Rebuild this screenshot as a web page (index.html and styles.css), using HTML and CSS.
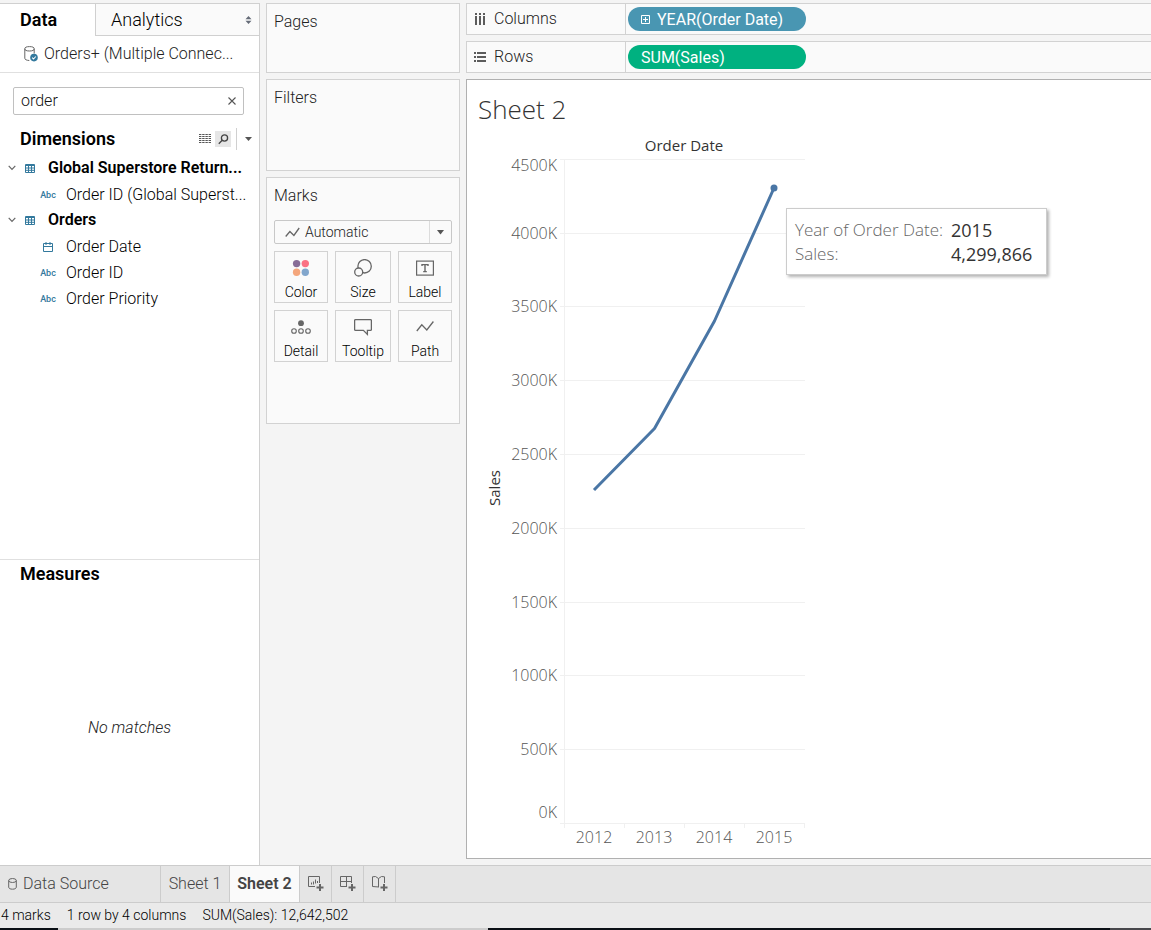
FILE: index.html
```html
<!DOCTYPE html>
<html lang="en">
<head>
<meta charset="utf-8">
<title>Sheet 2</title>
<link rel="stylesheet" href="styles.css">
</head>
<body>
<main class="workspace">
  <aside class="data-pane">
    <div class="pane-tabs">
      <button class="pane-tab pane-tab-active" type="button">Data</button>
      <button class="pane-tab pane-tab-rest" type="button">Analytics
        <svg width="7" height="8" viewBox="0 0 7 8"><path d="M.5 3.2 3.5 0l3 3.2zM.5 4.8 3.5 8l3-3.2z" fill="#666c78"/></svg>
      </button>
    </div>
    <div class="source">
      <svg width="15" height="16" viewBox="0 0 15 16" fill="none"><g stroke="#666" stroke-width="1"><ellipse cx="5.5" cy="2.8" rx="4.7" ry="2.2"/><path d="M.8 2.8v9.5c0 1.2 1.8 2.1 4.5 2.2M10.2 2.8v4.7"/></g><circle cx="10" cy="11.6" r="3.8" fill="#33799d"/><path d="m8.2 11.6 1.3 1.4 2.3-2.5" stroke="#fff" stroke-width="1.1"/></svg>
      <span>Orders+ (Multiple Connec...</span>
    </div>
    <section class="dimensions">
      <div class="search">
        <input type="text" value="order" aria-label="Search fields">
        <button type="button" aria-label="Clear search"><svg width="8" height="8" viewBox="0 0 8 8"><path d="m.5.5 7 7m0-7-7 7" stroke="#555" stroke-width="1.1"/></svg></button>
      </div>
      <div class="heading-row">
        <h2>Dimensions</h2>
        <button class="tool" type="button" aria-label="View data"><svg width="12" height="10" viewBox="0 0 12 10"><path d="M0 .5h12M0 2.5h12M0 4.5h12M0 6.5h12M0 8.5h12" stroke="#555" stroke-width="1" stroke-dasharray="2.4 .8"/></svg></button>
        <button class="tool tool-on" type="button" aria-label="Find field"><svg width="11" height="11" viewBox="0 0 11 11" fill="none" stroke="#444" stroke-width="1.3"><circle cx="6.5" cy="4" r="3.1"/><path d="M4.2 6.3.8 9.7"/></svg></button>
        <button class="tool tool-menu" type="button" aria-label="Dimensions menu"><svg width="7" height="4" viewBox="0 0 7 4"><path d="M0 0h7L3.5 4z" fill="#555"/></svg></button>
      </div>
      <ul class="fields">
        <li class="table-row">
          <svg class="chevron" width="8" height="6" viewBox="0 0 8 6"><path d="m.7.8 3.3 3.5L7.3.8" fill="none" stroke="#666" stroke-width="1.2"/></svg>
          <svg class="table-icon" width="10" height="9" viewBox="0 0 10 9"><path d="M.5.5h9v8h-9zM0 1.5h10M0 4h10M0 6.3h10M3.5 2v6.5M6.5 2v6.5" fill="none" stroke="#33799d"/></svg>
          <span>Global Superstore Return...</span>
        </li>
        <li class="field"><span class="type">Abc</span><span>Order ID (Global Superst...</span></li>
        <li class="table-row">
          <svg class="chevron" width="8" height="6" viewBox="0 0 8 6"><path d="m.7.8 3.3 3.5L7.3.8" fill="none" stroke="#666" stroke-width="1.2"/></svg>
          <svg class="table-icon" width="10" height="9" viewBox="0 0 10 9"><path d="M.5.5h9v8h-9zM0 1.5h10M0 4h10M0 6.3h10M3.5 2v6.5M6.5 2v6.5" fill="none" stroke="#33799d"/></svg>
          <span>Orders</span>
        </li>
        <li class="field"><span class="type"><svg width="10" height="10" viewBox="0 0 10 10"><path d="M.5 1.5h9v8h-9zM.5 4.5h9M3 0v3M7 0v3" fill="none" stroke="#33799d"/></svg></span><span>Order Date</span></li>
        <li class="field"><span class="type">Abc</span><span>Order ID</span></li>
        <li class="field"><span class="type">Abc</span><span>Order Priority</span></li>
      </ul>
    </section>
    <section class="measures">
      <h2>Measures</h2>
      <p>No matches</p>
    </section>
  </aside>

  <div class="cards">
    <section class="card card-pages"><h3>Pages</h3></section>
    <section class="card card-filters"><h3>Filters</h3></section>
    <section class="card card-marks">
      <h3>Marks</h3>
      <div class="mark-type">
        <svg class="mark-type-icon" width="15" height="11" viewBox="0 0 15 11"><path d="m.7 9.5 4.2-5 4 4L14.2 1" fill="none" stroke="#666" stroke-width="1.3"/></svg>
        <select aria-label="Mark type"><option>Automatic</option></select>
        <svg class="mark-type-arrow" width="7" height="5" viewBox="0 0 7 5"><path d="M0 0h7L3.5 4.5z" fill="#555"/></svg>
      </div>
      <div class="mark-grid">
        <button type="button"><svg width="18" height="18" viewBox="0 0 18 18"><circle cx="4.6" cy="4.6" r="3.7" fill="#876d97"/><circle cx="13.3" cy="4.6" r="3.7" fill="#fb7184"/><circle cx="4.6" cy="13.3" r="3.7" fill="#f4a67c"/><circle cx="13.3" cy="13.3" r="3.7" fill="#82a6cc"/></svg>Color</button>
        <button type="button"><svg width="18" height="18" viewBox="0 0 18 18" fill="#fafafa" stroke="#666" stroke-width="1.3"><circle cx="10.6" cy="7.3" r="6.7"/><circle cx="4.7" cy="13" r="4"/></svg>Size</button>
        <button type="button"><svg width="18" height="18" viewBox="0 0 18 18" fill="none" stroke="#666"><rect x=".6" y="2.1" width="16.8" height="14" stroke-width="1.2"/><path d="M6 7V5.6h6V7M9 5.6v7M7.2 12.6h3.6" stroke-width="1.4"/></svg>Label</button>
        <button type="button"><svg width="20" height="18" viewBox="0 0 20 18" fill="none" stroke="#666" stroke-width="1.1"><circle cx="10" cy="5.2" r="2.9" fill="#666" stroke="none"/><circle cx="3" cy="13" r="2.3"/><circle cx="10" cy="13" r="2.3"/><circle cx="17" cy="13" r="2.3"/></svg>Detail</button>
        <button type="button"><svg width="18" height="18" viewBox="0 0 18 18"><path d="M1.6 1.6h14.8q1 0 1 1v8.8q0 1-1 1h-3v4l-4-4H1.6q-1 0-1-1V2.6q0-1 1-1z" fill="none" stroke="#666" stroke-width="1.3"/></svg>Tooltip</button>
        <button type="button"><svg width="18" height="18" viewBox="0 0 18 18"><path d="m.8 13 5-6.200 5 5.200 6.600-8.500" fill="none" stroke="#666" stroke-width="1.3"/></svg>Path</button>
      </div>
    </section>
  </div>

  <div class="view">
    <div class="shelf">
      <div class="shelf-label"><svg width="12" height="12" viewBox="0 0 12 12"><path d="M2 0v12M6 0v12M10 0v12" stroke="#5c5c5c" stroke-width="2"/><path d="M0 2.5h12" stroke="#fafafa"/></svg>Columns</div>
      <button class="pill pill-blue" type="button"><svg width="9" height="9" viewBox="0 0 9 9"><path d="M.5.5h8v8h-8zM2 4.5h5M4.500 2v5" fill="none" stroke="#fff"/></svg>YEAR(Order Date)</button>
    </div>
    <div class="shelf">
      <div class="shelf-label"><svg width="12" height="12" viewBox="0 0 12 12"><path d="M0 2h12M0 6h12M0 10h12" stroke="#5c5c5c" stroke-width="2"/><path d="M2.500 0v12" stroke="#fafafa"/></svg>Rows</div>
      <button class="pill pill-green" type="button">SUM(Sales)</button>
    </div>
    <section class="sheet">
      <h1>Sheet 2</h1>
      <div class="chart-wrap">
        <svg class="chart" width="340" height="724" viewBox="467 130 340 724" role="img" aria-label="Sales by year of order date">
          <g class="grid-lines">
            <path d="M560 159.500H805M560 233.500H805M560 306.500H805M560 380.500H805M560 454.500H805M560 528.500H805M560 602.500H805M560 675.500H805M560 749.500H805M560 823.500H805"/>
            <path d="M564.500 159V828M624.500 823V828M684.500 823V828M744.500 823V828M804.500 823V828"/>
          </g>
          <text class="field-name" x="684" y="151" text-anchor="middle">Order Date</text>
          <text class="field-name" transform="translate(500 488) rotate(-90)" text-anchor="middle">Sales</text>
          <g class="axis" text-anchor="end">
            <text x="557" y="171">4500K</text><text x="557" y="239">4000K</text><text x="557" y="312">3500K</text><text x="557" y="386">3000K</text><text x="557" y="460">2500K</text><text x="557" y="534">2000K</text><text x="557" y="608">1500K</text><text x="557" y="681">1000K</text><text x="557" y="755">500K</text><text x="557" y="818">0K</text>
          </g>
          <g class="axis" text-anchor="middle">
            <text x="594" y="843">2012</text><text x="654" y="843">2013</text><text x="714" y="843">2014</text><text x="774" y="843">2015</text>
          </g>
          <path class="series" d="M594 490 654.500 428.500 714.500 321 774 188"/>
          <circle cx="774" cy="188" r="3.500" fill="#4a76a5"/>
        </svg>
        <dl class="tooltip">
          <dt>Year of Order Date:</dt><dd>2015</dd>
          <dt>Sales:</dt><dd>4,299,866</dd>
        </dl>
      </div>
    </section>
  </div>
</main>
<nav class="sheet-tabs">
  <button class="tab tab-source" type="button"><svg width="9" height="12" viewBox="0 0 9 12" fill="none" stroke="#666"><ellipse cx="4.500" cy="2.500" rx="3.800" ry="2"/><path d="M.7 2.500v6.700c0 1.200 1.500 2 3.800 2s3.800-.8 3.800-2V2.500"/></svg>Data Source</button>
  <button class="tab" type="button">Sheet 1</button>
  <button class="tab tab-active" type="button">Sheet 2</button>
  <button class="tab tab-new" type="button" aria-label="New worksheet"><svg width="16" height="16" viewBox="0 0 16 16" fill="none" stroke="#666"><path d="M7 10.500H.5v-10h11V7M3.500 8.500V6.500M5.500 8.500V5.500M7.500 7.500v-4M9.500 7V5"/><path d="M12 8v7M8.500 11.500h7" stroke-width="2"/></svg></button>
  <button class="tab tab-new" type="button" aria-label="New dashboard"><svg width="16" height="16" viewBox="0 0 16 16" fill="none" stroke="#666"><path d="M7 10.500H.5v-10h11V7M6.500.5v10M.5 5.500h11"/><path d="M12 8v7M8.500 11.500h7" stroke-width="2"/></svg></button>
  <button class="tab tab-new" type="button" aria-label="New story"><svg width="16" height="16" viewBox="0 0 16 16" fill="none" stroke="#666"><path d="M7 11 .5 10.500V.8L3.500.5l3 2 3-2 3 .3V7M6.500 2.500V11"/><path d="M12 8v7M8.500 11.500h7" stroke-width="2"/></svg></button>
</nav>
<footer class="status"><span>4 marks</span><span>1 row by 4 columns</span><span>SUM(Sales): 12,642,502</span></footer>
</body>
</html>
```
FILE: styles.css
```css
* { box-sizing: border-box; }
body {
  margin: 0;
  min-height: 100vh;
  display: flex;
  flex-direction: column;
  background: #f4f4f4;
  color: #000;
  font: 300 16px/20px Roboto, "Liberation Sans", sans-serif;
}
h1, h2, h3, p, ul, dl, dd { margin: 0; padding: 0; font-weight: 300; }
button, input, select { font: inherit; color: inherit; margin: 0; padding: 0; border: 0; background: none; }
svg { display: block; flex: none; }

.workspace { flex: 1; display: grid; grid-template-columns: 260px 194px minmax(0, 1fr); column-gap: 6px; padding-top: 3px; }

.data-pane { display: flex; flex-direction: column; background: #fff; border: solid #d0d0d0; border-width: 1px 1px 0 0; }
.pane-tabs { display: flex; height: 32px; font-size: 18px; }
.pane-tab { text-align: left; }
.pane-tab-active { width: 95px; padding-left: 20px; font-weight: 600; }
.pane-tab-rest { flex: 1; display: flex; align-items: center; justify-content: space-between; padding: 0 7px 0 15px; background: #fafafa; border: solid #d0d0d0; border-width: 0 0 1px 1px; }
.source { display: flex; align-items: center; gap: 5px; height: 37px; padding-left: 24px; border-bottom: 1px solid #e0e0e0; color: #222; white-space: nowrap; }
.dimensions { flex: 1; padding-top: 14px; }
.search { display: flex; align-items: center; height: 28px; margin: 0 15px 0 13px; padding: 0 7px; border: 1px solid #c0c0c0; border-radius: 2px; color: #111; }
.search input { flex: 1; min-width: 0; outline: 0; }
.heading-row { display: flex; align-items: center; height: 40px; margin-top: 4px; padding-left: 20px; }
h2 { font-size: 18px; font-weight: 600; }
.heading-row h2 { flex: 1; }
.tool { display: flex; align-items: center; justify-content: center; width: 16px; height: 16px; }
.tool-on { margin: 0 5px 0 2px; background: #e6e6e6; }
.tool-menu { width: 23px; height: 22px; border-left: 1px solid #d0d0d0; }
.fields { list-style: none; margin-top: -4px; white-space: nowrap; }
.fields li { display: flex; align-items: center; height: 26px; }
.table-row { padding-left: 8px; font-weight: 600; }
.chevron { margin-right: 9px; }
.table-icon { margin-right: 13px; }
.fields .field { padding: 2px 0 0 39px; }
.type { display: flex; justify-content: center; width: 18px; margin-right: 9px; font-size: 9px; font-weight: 500; color: #33799d; }
.measures { display: flex; flex-direction: column; min-height: 306px; padding-top: 4px; border-top: 1px solid #e0e0e0; }
.measures h2 { padding-left: 20px; }
.measures p { margin: auto; padding-top: 6px; font-style: italic; color: #222; }

.cards { display: flex; flex-direction: column; gap: 6px; }
.card { padding: 8px 7px; background: #fafafa; border: 1px solid #d2d2d2; }
.card-pages { min-height: 70px; }
.card-filters { min-height: 92px; }
.card-marks { min-height: 247px; }
h3 { font-size: 16px; line-height: 20px; color: #222; }
.mark-type { position: relative; margin-top: 14px; font-size: 14px; color: #222; }
.mark-type select { display: block; width: 100%; height: 24px; padding-left: 30px; appearance: none; border: 1px solid #c8c8c8; border-radius: 2px; }
.mark-type-icon { position: absolute; left: 11px; top: 7px; }
.mark-type-arrow { position: absolute; right: 8px; top: 10px; }
.mark-type::after { content: ""; position: absolute; right: 22px; top: 1px; bottom: 1px; border-left: 1px solid #dcdcdc; }
.mark-grid { display: grid; grid-template-columns: 54px 1fr 54px; gap: 7px; margin-top: 7px; }
.mark-grid button { display: flex; flex-direction: column; align-items: center; gap: 5px; height: 52px; padding-top: 7px; border: 1px solid #d2d2d2; font-size: 14px; line-height: 20px; }

.view { display: flex; flex-direction: column; gap: 6px; padding-bottom: 6px; }
.shelf { display: flex; align-items: center; height: 32px; background: #fafafa; border: solid #d2d2d2; border-width: 1px 0 1px 1px; }
.shelf-label { display: flex; align-items: center; align-self: stretch; gap: 8px; width: 159px; padding-left: 7px; border-right: 1px solid #d2d2d2; color: #222; }
.pill { display: flex; align-items: center; gap: 7px; width: 178px; height: 24px; margin-left: 2px; padding: 1px 0 0 13px; border-radius: 12px; color: #fff; font-weight: 400; white-space: nowrap; }
.pill-blue { background: #4996b2; }
.pill-green { background: #00b180; }
.sheet { flex: 1; padding: 12px 0 0; background: #fff; border: solid #b0b0b0; border-width: 1px 0 1px 1px; }
h1 { padding-left: 11px; font: 300 26px/34px "Open Sans", "Noto Sans", sans-serif; color: #333; }
.chart-wrap { position: relative; margin-top: 4px; font-family: "Open Sans", "Noto Sans", sans-serif; }
.chart text { font-size: 15px; }
.grid-lines { fill: none; stroke: #f0f0f0; }
.field-name { fill: #333; font-weight: 400; }
.chart .axis text { fill: #555; font-size: 16px; font-weight: 300; }
.series { fill: none; stroke: #4a76a5; stroke-width: 3; stroke-linejoin: round; }
.tooltip { position: absolute; left: 319px; top: 78px; display: grid; grid-template-columns: auto auto; column-gap: 8px; padding: 9px 14px 8px 8px; background: #fff; border: 1px solid #ccc; box-shadow: 2px 2px 3px rgba(0, 0, 0, .3); font-size: 17px; line-height: 24px; white-space: nowrap; }
.tooltip dt { font-weight: 300; color: #666; }
.tooltip dd { font-size: 18px; font-weight: 500; color: #333; }

.sheet-tabs { display: flex; height: 38px; background: #e5e5e5; border: solid #ccc; border-width: 1px 0; color: #444; }
.tab { display: flex; align-items: center; justify-content: center; min-width: 69px; border-right: 1px solid #ccc; }
.tab-source { width: 161px; justify-content: flex-start; gap: 6px; padding-left: 8px; }
.tab-active { min-width: 70px; background: #fafafa; font-weight: 600; }
.tab-new { min-width: 32px; }
.status { display: flex; gap: 16px; height: 27px; padding: 2px 1px 0; font-size: 14px; background: linear-gradient(90deg, #0b1015 58px, #ccc 58px 488px, #0b1015 488px calc(100% - 41px), #48484c calc(100% - 41px)) bottom / 100% 2px no-repeat #eaeaea; }
```
